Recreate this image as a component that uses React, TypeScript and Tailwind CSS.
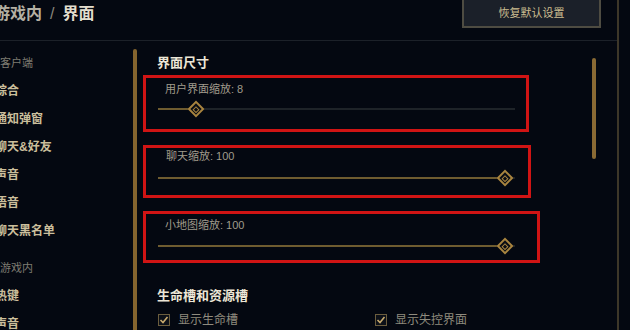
import React from "react";

const FONT = "font-['Liberation_Sans','Noto_Sans_CJK_SC',sans-serif]";

const Thumb: React.FC<{ left: number }> = ({ left }) => (
  <div
    className="absolute top-0 w-[18px] h-[18px] flex items-center justify-center"
    style={{ left: left - 9 }}
  >
    <div className="w-[12px] h-[12px] rotate-45 border-2 border-[#a8843f] bg-[#0a0d14] flex items-center justify-center">
      <div className="w-[5px] h-[5px] border border-[#a8843f]" />
    </div>
  </div>
);

const Slider: React.FC<{
  label: string;
  pos: number;
  boxW: number;
  boxH: number;
  labelPad: number;
  labelLeft: number;
  gap: number;
  mt: string;
}> = ({ label, pos, boxW, boxH, labelPad, labelLeft, gap, mt }) => (
  <div
    className={`ml-[6px] shrink-0 border-[3px] border-[#d01414] flex flex-col ${mt}`}
    style={{ width: boxW, height: boxH }}
  >
    <div
      className="text-[11px] leading-[14px] text-[#a09b8c]"
      style={{ paddingTop: labelPad, paddingLeft: labelLeft }}
    >
      {label}
    </div>
    <div className="relative ml-[12px] w-[357px] h-[18px]" style={{ marginTop: gap }}>
      <div className="absolute left-0 right-0 top-[8px] h-[2px] bg-[#1e2328]" />
      <div
        className="absolute left-0 top-[8px] h-[2px] bg-[#6f5c30]"
        style={{ width: pos }}
      />
      <Thumb left={pos} />
    </div>
  </div>
);

const Check: React.FC<{ label: string }> = ({ label }) => (
  <div className="flex items-center gap-[8px]">
    <div className="w-[12px] h-[12px] border border-[#6b5d3e] bg-[#0c1018] flex items-center justify-center">
      <svg width="10" height="10" viewBox="0 0 10 10">
        <path d="M1.5 5 L4 7.5 L8.5 2" fill="none" stroke="#c8aa6e" strokeWidth="1.6" />
      </svg>
    </div>
    <span className="text-[12px] leading-[14px] text-[#8f8b7e]">{label}</span>
  </div>
);

const navTop = [
  { t: "客户端", head: true },
  { t: "综合" },
  { t: "通知弹窗" },
  { t: "聊天&好友" },
  { t: "声音" },
  { t: "语音" },
  { t: "聊天黑名单" },
];
const navBottom = [{ t: "游戏内", head: true }, { t: "热键" }, { t: "声音" }];

const NavItem: React.FC<{ t: string; head?: boolean }> = ({ t, head }) => (
  <div
    className={`h-[28px] shrink-0 flex items-center whitespace-nowrap ${
      head
        ? "ml-[0px] text-[11px] text-[#7f7c72]"
        : "-ml-[5px] text-[12px] font-bold text-[#cbbf9c]"
    }`}
  >
    {t}
  </div>
);

export default function App() {
  return (
    <div className={`w-[630px] h-[330px] overflow-hidden bg-[#040811] flex ${FONT}`}>
      <div className="w-[617px] flex flex-col">
        {/* header */}
        <div className="h-[41px] shrink-0 border-b border-[#1c2129] flex items-start justify-between">
          <div className="-ml-[6px] mt-[4px] flex items-center gap-[8px] text-[16px] font-bold leading-[20px]">
            <span className="text-[#b4b0a3]">游戏内</span>
            <span className="text-[#8a877c] font-normal">/</span>
            <span className="text-[#e2ddcd]">界面</span>
          </div>
          <div className="mr-[16px] -mt-[2px] w-[139px] h-[30px] border-2 border-[#4e4c42] bg-[#1b2029] flex items-center justify-center text-[11px] text-[#cdbe91]">
            恢复默认设置
          </div>
        </div>

        <div className="flex flex-1 min-h-0 overflow-hidden">
          {/* sidebar */}
          <div className="w-[133px] shrink-0 flex flex-col pt-[8px]">
            {navTop.map((n, i) => (
              <NavItem key={i} {...n} />
            ))}
            <div className="mt-[9px] shrink-0">
              {navBottom.map((n, i) => (
                <NavItem key={i} {...n} />
              ))}
            </div>
          </div>
          <div className="w-[4px] shrink-0 mt-[8px] rounded-t-[2px] bg-[#84642e]" />

          {/* content */}
          <div className="w-[455px] shrink-0 flex flex-col">
            <div className="shrink-0 pt-[14px] pl-[20px] text-[13px] leading-[16px] font-bold text-[#ece6d6]">
              界面尺寸
            </div>
            <Slider label="用户界面缩放: 8" pos={38} boxW={386} boxH={57} labelPad={4} labelLeft={19} gap={4} mt="mt-[4px]" />
            <Slider label="聊天缩放: 100" pos={347} boxW={388} boxH={53} labelPad={1} labelLeft={20} gap={6} mt="mt-[13px]" />
            <Slider label="小地图缩放: 100" pos={347} boxW={397} boxH={52} labelPad={4} labelLeft={19} gap={5} mt="mt-[13px]" />
            <div className="shrink-0 mt-[25px] pl-[20px] text-[13px] leading-[16px] font-bold text-[#ece6d6]">
              生命槽和资源槽
            </div>
            <div className="shrink-0 mt-[9px] pl-[21px] flex">
              <div className="w-[217px]">
                <Check label="显示生命槽" />
              </div>
              <Check label="显示失控界面" />
            </div>
          </div>

          {/* right scrollbar */}
          <div className="w-[4px] h-[101px] shrink-0 mt-[17px] rounded-full bg-[#8a6a34]" />
        </div>
      </div>
      <div className="w-[2px] h-full bg-[#3d3729]" />
    </div>
  );
}
